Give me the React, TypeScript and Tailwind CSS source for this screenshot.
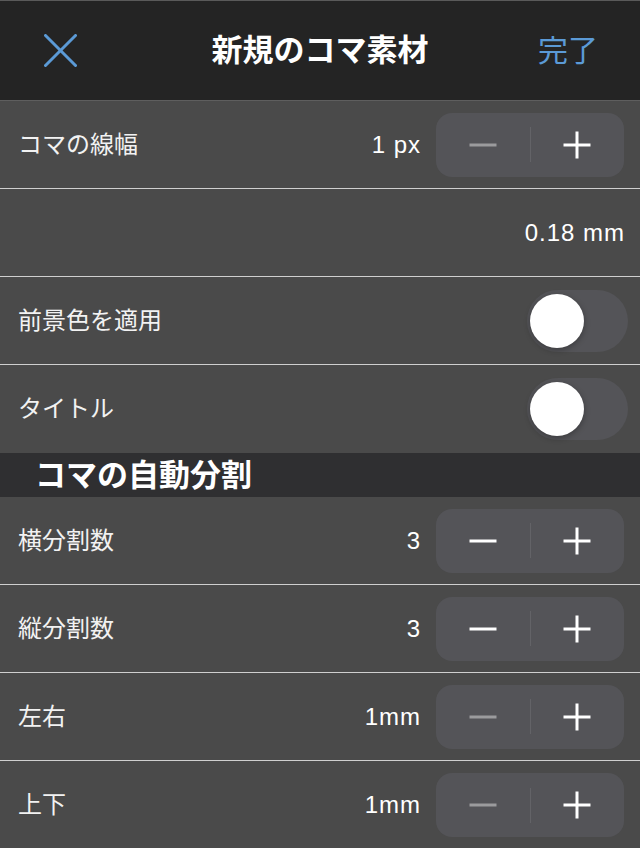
import React from "react";

const FONT = "font-['Liberation_Sans','Noto_Sans_CJK_JP',sans-serif]";
const NUM = "tracking-[1px] -mr-px";

function Minus({ enabled }: { enabled: boolean }) {
  return (
    <svg width="28" height="28" viewBox="0 0 28 28">
      <line x1="0.5" y1="14" x2="27.5" y2="14" stroke={enabled ? "#ffffff" : "#9b9b9d"} strokeWidth="3" />
    </svg>
  );
}

function Plus() {
  return (
    <svg width="28" height="28" viewBox="0 0 28 28">
      <line x1="0.5" y1="14" x2="27.5" y2="14" stroke="#ffffff" strokeWidth="3" />
      <line x1="14" y1="0.5" x2="14" y2="27.5" stroke="#ffffff" strokeWidth="3" />
    </svg>
  );
}

function Stepper({ minusEnabled }: { minusEnabled: boolean }) {
  return (
    <div className="ml-4 flex h-[64px] w-[188px] items-center rounded-[16px] bg-[#545458]">
      <div className="flex flex-1 items-center justify-center">
        <Minus enabled={minusEnabled} />
      </div>
      <div className="h-[35px] w-px bg-[#636367]" />
      <div className="flex flex-1 items-center justify-center">
        <Plus />
      </div>
    </div>
  );
}

function StepRow({ label, value, minusEnabled, border = true }: { label: string; value: string; minusEnabled: boolean; border?: boolean }) {
  return (
    <div className={`flex h-[88px] items-center pl-[18px] pr-4 ${border ? "border-b border-[#cfcfcf]" : ""}`}>
      <span className="text-[24px] leading-none text-[#f2f2f2]">{label}</span>
      <span className={`${NUM} ml-auto text-[24px] leading-none text-white`}>{value}</span>
      <Stepper minusEnabled={minusEnabled} />
    </div>
  );
}

function ToggleRow({ label, border = true }: { label: string; border?: boolean }) {
  return (
    <div className={`flex h-[88px] items-center pl-[18px] pr-3 ${border ? "border-b border-[#cfcfcf]" : ""}`}>
      <span className="text-[24px] leading-none text-[#f2f2f2]">{label}</span>
      <div className="ml-auto flex h-[62px] w-[101px] items-center rounded-full bg-[#545458] pl-[3px]">
        <div className="h-[54px] w-[54px] rounded-full bg-white shadow-[0_2px_6px_rgba(0,0,0,0.3)]" />
      </div>
    </div>
  );
}

export default function App() {
  return (
    <div className={`${FONT} h-[848px] w-[640px] overflow-hidden bg-[#4a4a4a]`}>
      <header className="grid h-[101px] grid-cols-[1fr_auto_1fr] items-center border-t border-b border-t-[#5a5a5a] border-b-[#5e5e5e] bg-[#242424]">
        <div className="pl-[44px]">
          <svg width="33" height="33" viewBox="0 0 33 33">
            <line x1="1.5" y1="1.5" x2="31.5" y2="31.5" stroke="#5b9ad6" strokeWidth="3" strokeLinecap="round" />
            <line x1="31.5" y1="1.5" x2="1.5" y2="31.5" stroke="#5b9ad6" strokeWidth="3" strokeLinecap="round" />
          </svg>
        </div>
        <div className="text-[31px] font-bold leading-none text-white">新規のコマ素材</div>
        <div className="flex justify-end pr-[42px] text-[30px] leading-none text-[#5b9ad6]">完了</div>
      </header>

      <StepRow label="コマの線幅" value="1 px" minusEnabled={false} />
      <div className="flex h-[88px] items-center justify-end border-b border-[#cfcfcf] pr-4">
        <span className={`${NUM} text-[24px] leading-none text-white`}>0.18 mm</span>
      </div>
      <ToggleRow label="前景色を適用" />
      <ToggleRow label="タイトル" border={false} />

      <div className="flex h-[44px] items-center bg-[#2f2f31] pl-[35px]">
        <span className="text-[31px] font-bold leading-none text-white">コマの自動分割</span>
      </div>

      <StepRow label="横分割数" value="3" minusEnabled={true} />
      <StepRow label="縦分割数" value="3" minusEnabled={true} />
      <StepRow label="左右" value="1mm" minusEnabled={false} />
      <StepRow label="上下" value="1mm" minusEnabled={false} border={false} />
    </div>
  );
}
